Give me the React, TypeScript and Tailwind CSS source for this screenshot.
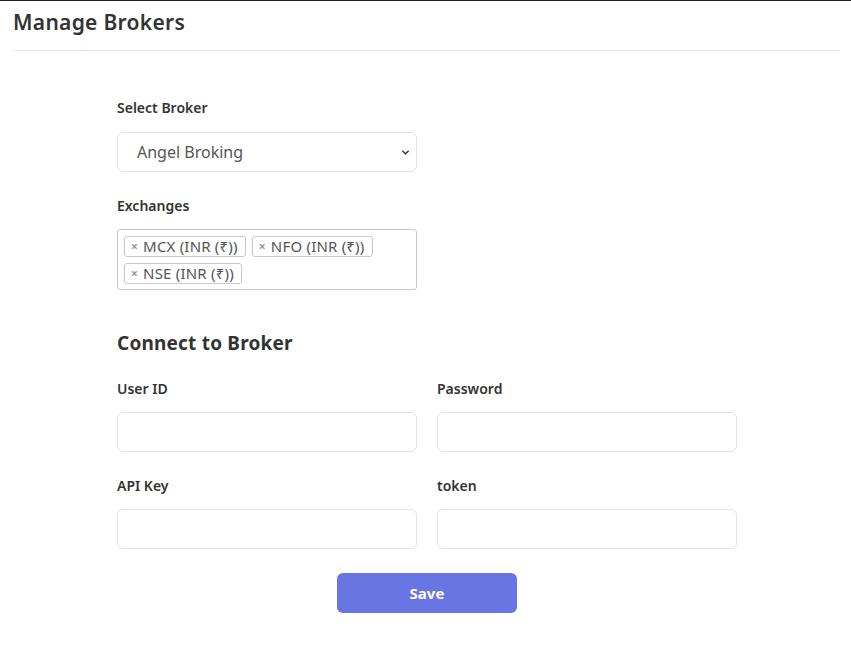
const font = { fontFamily: '"Noto Sans", "Open Sans", sans-serif' };

function Field({ label }: { label: string }) {
  return (
    <div className="flex flex-col">
      <label className="text-[14px] font-semibold text-[#333] leading-[20px] mb-[13px]">{label}</label>
      <input className="h-[40px] w-full rounded-[6px] border border-[#e4e4e4] bg-white px-3 outline-none" />
    </div>
  );
}

function Tag({ text }: { text: string }) {
  return (
    <span className="inline-flex items-center h-[21px] rounded-[3px] border border-[#c8c8c8] pl-[6px] pr-[7px] text-[15px] text-[#555] leading-none tracking-[0.2px]">
      <span className="text-[12px] font-bold text-[#999] mr-[5px]">×</span>
      {text}
    </span>
  );
}

export default function App() {
  return (
    <div className="min-h-[648px] bg-white border-t border-[#222]" style={font}>
      <div className="ml-[13px] mr-[11px]">
        <div className="h-[50px] border-b border-[#e8e8e8] pt-[8px]">
          <h1 className="text-[21px] font-semibold text-[#333] leading-[26px] tracking-[0.3px]">Manage Brokers</h1>
        </div>

        <div className="w-[620px] ml-[104px] pt-[47px] pb-10">
          <div className="w-[300px]">
            <label className="block text-[14px] font-semibold text-[#333] leading-[20px] mb-[14px]">Select Broker</label>
            <div className="relative h-[40px] rounded-[6px] border border-[#e4e4e4] flex items-center pl-[19px]">
              <span className="text-[16px] text-[#555]">Angel Broking</span>
              <svg className="absolute right-[6px] top-[15px]" width="9" height="9" viewBox="0 0 10 10" fill="none">
                <path d="M1.5 3l3.5 3.5L8.5 3" stroke="#444" strokeWidth="1.8" />
              </svg>
            </div>

            <label className="block text-[14px] font-semibold text-[#333] leading-[20px] mt-[24px] mb-[13px]">Exchanges</label>
            <div className="h-[61px] rounded-[3px] border border-[#c8c8c8] px-[6px] pt-[6px] flex flex-wrap content-start gap-x-[6px] gap-y-[6px]">
              <Tag text="MCX (INR (₹))" />
              <Tag text="NFO (INR (₹))" />
              <Tag text="NSE (INR (₹))" />
            </div>
          </div>

          <h2 className="text-[19px] font-bold text-[#333] leading-[24px] mt-[41px] tracking-[0.2px]">Connect to Broker</h2>

          <div className="grid grid-cols-2 gap-x-[20px] gap-y-[24px] mt-[24px]">
            <Field label="User ID" />
            <Field label="Password" />
            <Field label="API Key" />
            <Field label="token" />
          </div>

          <div className="flex justify-center mt-[24px]">
            <button className="w-[180px] h-[40px] rounded-[6px] bg-[#6875e2] text-white text-[15px] font-bold">Save</button>
          </div>
        </div>
      </div>
    </div>
  );
}
